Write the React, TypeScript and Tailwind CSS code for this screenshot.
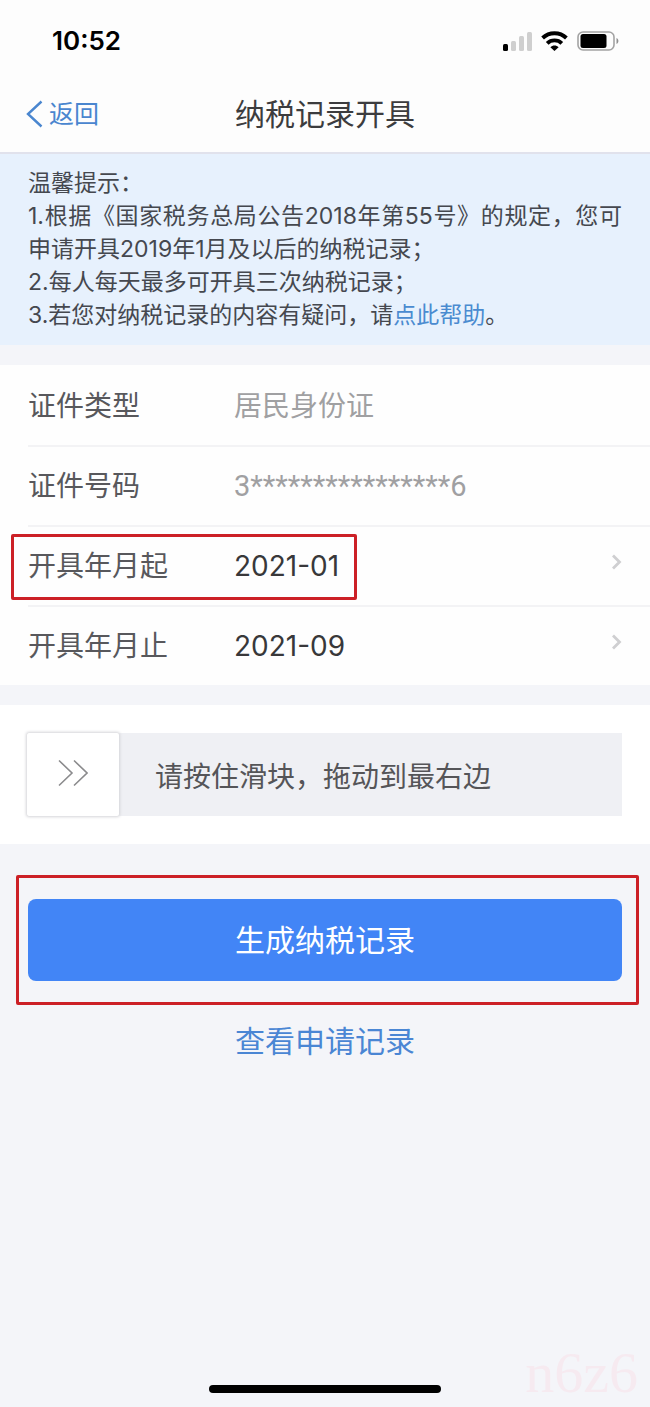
import { useState } from "react";
import type { ReactNode } from "react";

const THUMB_WIDTH = 92;

const StatusBar = () => {
  return (
    <div className="flex h-[74px] items-center justify-between pt-2 pr-[31px] pl-[52px] text-black">
      <span className="text-[26px] leading-8 font-semibold">10:52</span>
      <div className="flex items-center gap-[9px]">
        <svg width="29" height="20" viewBox="0 0 29 20" aria-hidden="true">
          <rect x="0" y="13" width="5" height="7" rx="1.5" fill="#000" />
          <rect x="8" y="10" width="5" height="10" rx="1.5" fill="#cfcfcf" />
          <rect x="16" y="5" width="5" height="15" rx="1.5" fill="#cfcfcf" />
          <rect x="24" y="1" width="5" height="19" rx="1.5" fill="#cfcfcf" />
        </svg>
        <svg width="27" height="20" viewBox="0 0 27 20" aria-hidden="true">
          <g fill="none" stroke="#000" strokeWidth="3.9">
            <path d="M1.6 7C8.2 0.6 18.8 0.6 25.4 7" />
            <path d="M6.2 12.3C10.2 8.4 16.8 8.4 20.8 12.3" />
          </g>
          <path
            d="M13.5 20L9.4 16.3C11.7 14 15.3 14 17.6 16.3Z"
            fill="#000"
          />
        </svg>
        <svg width="42" height="20" viewBox="0 0 42 20" aria-hidden="true">
          <rect
            x="1"
            y="1"
            width="36"
            height="18"
            rx="5"
            fill="none"
            stroke="#a3a3a3"
            strokeWidth="1.6"
          />
          <rect x="3.5" y="3" width="26" height="14" rx="2.5" fill="#000" />
          <path d="M39.5 7C42 8 42 12 39.5 13Z" fill="#8f8f8f" />
        </svg>
      </div>
    </div>
  );
};

const NavBar = () => {
  return (
    <header className="grid h-20 grid-cols-[1fr_auto_1fr] items-center border-b-2 border-[#e1e2ec] px-[26px] pt-0.5">
      <a href="#back" className="flex items-center gap-1.5 text-[#4a86cf]">
        <svg width="17" height="28" viewBox="0 0 17 28" aria-hidden="true">
          <path
            d="M15.5 1.5L2 14L15.5 26.5"
            fill="none"
            stroke="currentColor"
            strokeWidth="2.4"
          />
        </svg>
        <span className="text-[25px] leading-8">返回</span>
      </a>
      <h1 className="text-[30px] leading-10 text-[#3c3c3e]">纳税记录开具</h1>
    </header>
  );
};

const Notice = () => {
  return (
    <section className="bg-[#e7f1fd] px-7 py-[13px] text-justify text-[23px] leading-[33px] text-[#45484f]">
      <p>温馨提示：</p>
      <p>
        1.根据《国家税务总局公告2018年第55号》的规定，您可申请开具2019年1月及以后的纳税记录；
      </p>
      <p>2.每人每天最多可开具三次纳税记录；</p>
      <p>
        3.若您对纳税记录的内容有疑问，请
        <a href="#help" className="text-[#4a8bd0]">
          点此帮助
        </a>
        。
      </p>
    </section>
  );
};

type RowProps = {
  label: string;
  children: ReactNode;
};

const InfoRow = ({ label, children }: RowProps) => {
  return (
    <div className="flex h-20 items-center border-t-2 border-[#f3f3f5] text-[#a0a0a2] first:border-transparent">
      <span className="w-[206px] text-[#58585c]">{label}</span>
      {children}
    </div>
  );
};

type PickerRowProps = {
  label: string;
  value: string;
  children?: ReactNode;
};

const PickerRow = ({ label, value, children }: PickerRowProps) => {
  return (
    <div className="relative h-20 border-t-2 border-[#f3f3f5]">
      <button
        type="button"
        className="flex h-full w-full items-center pr-7 text-left"
      >
        <span className="w-[206px]">{label}</span>
        <span className="grow text-[#38383a]">{value}</span>
        <svg
          width="11"
          height="16"
          viewBox="0 0 11 16"
          className="mb-2"
          aria-hidden="true"
        >
          <path
            d="M2 1.5L8.5 8L2 14.5"
            fill="none"
            stroke="#cfcfd1"
            strokeWidth="2.8"
          />
        </svg>
      </button>
      {children}
    </div>
  );
};

const SlideToVerify = () => {
  const [value, setValue] = useState(0);
  const left = `calc((100% - ${THUMB_WIDTH}px) * ${value / 100})`;

  return (
    <section className="bg-white py-7 pr-7 pl-[27px]">
      <div className="relative h-[83px] bg-[#eff0f4]">
        <label
          htmlFor="slide"
          className="flex h-full items-center pt-1 pl-32 text-[28px] leading-10 text-[#555558]"
        >
          请按住滑块，拖动到最右边
        </label>
        <input
          id="slide"
          type="range"
          min={0}
          max={100}
          value={value}
          onChange={(e) => setValue(Number(e.target.value))}
          className="absolute inset-0 h-full w-full cursor-pointer appearance-none bg-transparent [&::-webkit-slider-thumb]:h-[83px] [&::-webkit-slider-thumb]:w-[92px] [&::-webkit-slider-thumb]:appearance-none [&::-webkit-slider-thumb]:rounded-xs [&::-webkit-slider-thumb]:bg-white [&::-webkit-slider-thumb]:shadow-[0_0_3px_1px_#d4d4d8]"
        />
        <div
          className="pointer-events-none absolute inset-y-0 flex w-[92px] items-center justify-center pb-1"
          style={{ left }}
        >
          <svg width="30" height="28" viewBox="0 0 30 28" aria-hidden="true">
            <g fill="none" stroke="#8b8b8d" strokeWidth="1.6">
              <path d="M1 1.5L14 14L1 26.5" />
              <path d="M16 1.5L29 14L16 26.5" />
            </g>
          </svg>
        </div>
      </div>
    </section>
  );
};

const App = () => {
  return (
    <div
      lang="zh-CN"
      className="relative flex min-h-screen flex-col bg-[#f4f5f9] font-[Inter,'Noto_Sans_CJK_SC',sans-serif]"
    >
      <div className="bg-[#fdfdfd]">
        <StatusBar />
        <NavBar />
      </div>
      <Notice />
      <main className="mt-5 flex flex-col gap-5">
        <section className="bg-[#fefefe] pl-7 text-[28px] leading-10 text-[#58585c]">
          <InfoRow label="证件类型">
            <span>居民身份证</span>
          </InfoRow>
          <InfoRow label="证件号码">
            <span className="font-[Roboto,sans-serif] text-[29px]">
              3****************6
            </span>
          </InfoRow>
          <PickerRow label="开具年月起" value="2021-01">
            <div className="pointer-events-none absolute top-[7px] -left-[17px] h-[66px] w-[346px] rounded-xs border-3 border-[#cc2026]" />
          </PickerRow>
          <PickerRow label="开具年月止" value="2021-09" />
        </section>
        <SlideToVerify />
      </main>
      <div className="relative mt-[55px] px-7">
        <button
          type="button"
          className="h-[82px] w-full rounded-lg bg-[#4285f6] text-[30px] leading-10 text-white"
        >
          生成纳税记录
        </button>
        <div className="pointer-events-none absolute -inset-y-6 right-[11px] left-4 rounded-xs border-3 border-[#cc2026]" />
      </div>
      <a
        href="#records"
        className="mt-10 self-center text-[30px] leading-10 text-[#4a86d4]"
      >
        查看申请记录
      </a>
      <div className="mt-auto mb-3.5 h-2 w-[232px] self-center rounded-full bg-black" />
      <span className="pointer-events-none absolute right-3 bottom-1 font-['Liberation_Serif',serif] text-[58px] leading-[60px] text-[#f6eaf0]">
        n6z6
      </span>
    </div>
  );
};

export default App;
